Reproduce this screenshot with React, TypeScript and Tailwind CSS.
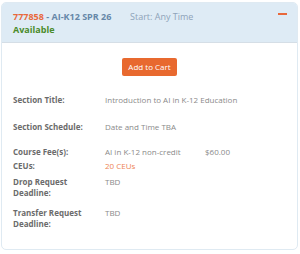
import React from 'react';

const font = { fontFamily: '"Open Sans", "Liberation Sans", sans-serif' };

interface Row {
  label: React.ReactNode;
  value: React.ReactNode;
  mt: string;
}

const rows: Row[] = [
  { label: 'Section Title:', value: 'Introduction to AI in K-12 Education', mt: 'mt-[18px]' },
  { label: 'Section Schedule:', value: 'Date and Time TBA', mt: 'mt-[16px]' },
  {
    label: 'Course Fee(s):',
    value: (
      <div className="flex">
        <span className="w-[100px]">AI in K-12 non-credit</span>
        <span>$60.00</span>
      </div>
    ),
    mt: 'mt-[14px]',
  },
  { label: 'CEUs:', value: <span className="text-[#ee8455]">20 CEUs</span>, mt: 'mt-[3px]' },
  { label: <>Drop Request<br />Deadline:</>, value: 'TBD', mt: 'mt-[5px]' },
  { label: <>Transfer Request<br />Deadline:</>, value: 'TBD', mt: 'mt-[9px]' },
];

export default function App() {
  return (
    <div className="w-[300px] h-[254px] bg-white pt-[2px] px-[1px]" style={font}>
      <div className="w-[297px] h-[248px] border border-[#dfeaf2] rounded-[5px] overflow-hidden">
        <div className="bg-[#deebf5] border-b border-[#d5dee6] pl-[11px] pr-[10px] pt-[7px] pb-[6px] flex">
          <div className="flex-1">
            <div className="flex text-[9px] leading-[13px]">
              <span className="w-[117px] font-bold text-[#6687a8]">
                <span className="text-[#e8683b]">777858</span> - AI-K12 SPR 26
              </span>
              <span className="text-[#8ea3b9]">Start: Any Time</span>
            </div>
            <div className="text-[9px] leading-[13px] font-bold text-[#4b8b2b]">Available</div>
          </div>
          <div className="w-[9px] h-[2px] bg-[#e8683b] mt-[3px]" />
        </div>

        <div className="pt-[15px] pl-[11px]">
          <div className="flex justify-center pr-[11px]">
            <button className="h-[18px] px-[6px] rounded-[2px] bg-[#e8692f] text-white text-[8px] leading-[18px]">
              Add to Cart
            </button>
          </div>
          {rows.map((row, idx) => (
            <div key={idx} className={`flex text-[8px] leading-[11px] ${row.mt}`}>
              <div className="w-[92px] font-bold text-[#6b6b6b]">{row.label}</div>
              <div className="flex-1 text-[#8a8a8a]">{row.value}</div>
            </div>
          ))}
        </div>
      </div>
    </div>
  );
}
